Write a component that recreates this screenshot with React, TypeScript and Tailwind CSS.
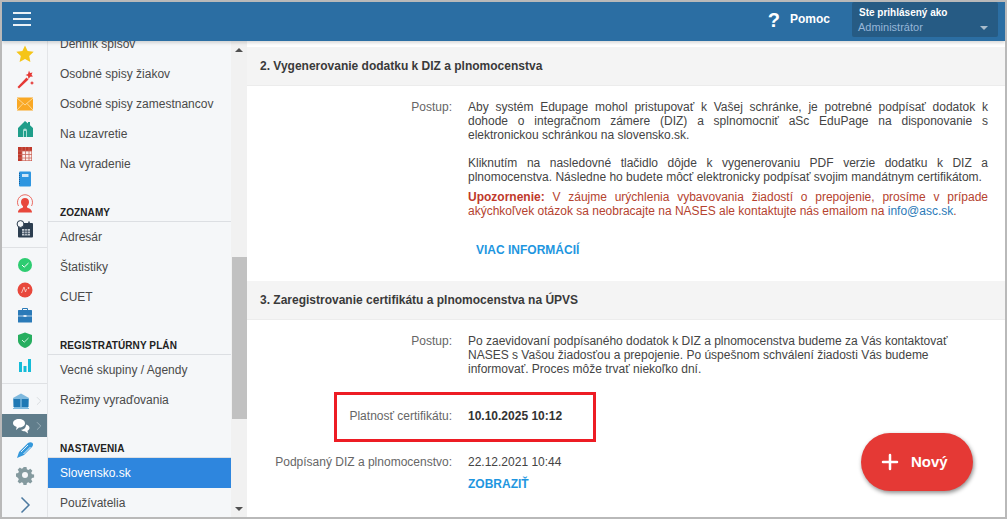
import { ChevronRight, Plus } from 'lucide-react';

const font = { fontFamily: '"Liberation Sans", Arial, sans-serif' };

function MenuItem({ label, active }: { label: string; active?: boolean }) {
  return (
    <div className={`h-[30px] pl-3 flex items-center text-[12px] ${active ? 'bg-[#2e86de] text-white' : 'text-[#4a4a4a]'}`}>
      {label}
    </div>
  );
}

function MenuHeading({ label }: { label: string }) {
  return (
    <div className="h-[16px] mt-[27px] pt-[1px] pl-3 text-[10px] font-bold tracking-[0.1px] text-[#222] border-b border-[#dcdfe3] leading-[12px]">
      {label}
    </div>
  );
}

function Icon({ children, h = 'h-[25px]' }: { children: React.ReactNode; h?: string }) {
  return (
    <div className={`${h} flex items-center justify-center`}>
      <svg viewBox="0 0 20 20" className="w-[20px] h-[20px]">
        {children}
      </svg>
    </div>
  );
}

function SideIcons() {
  return (
    <div className="w-[46px] shrink-0 bg-[#f5f7f9] border-r border-[#e3e5e8] flex flex-col">
      <Icon>
        <path d="M10 1.500l2.600 5.600 6.100.7-4.500 4.200 1.200 6L10 15l-5.400 3 1.200-6L1.300 7.800l6.100-.7z" fill="#f5c518" />
      </Icon>
      <Icon>
        <path d="M2.500 18L11.500 8.500l2 2-9.500 9z" fill="#e53935" />
        <path d="M14 1.500l1 2.500 2.500-.5-1 2.300 1.500 1.700-2.800.2L13.500 10 13 7l-2.500-1 2.500-1z" fill="#e53935" />
        <path d="M17 12l.7 1.300 1.300.7-1.300.7-.7 1.300-.7-1.300-1.300-.7 1.300-.7z" fill="#e53935" />
      </Icon>
      <Icon>
        <rect x="2" y="3.500" width="16" height="13" fill="#f9a825" />
        <path d="M2 4l8 7 8-7M2 16l6-6.500M18 16l-6-6.500" fill="none" stroke="#fde2b0" strokeWidth="0.8" />
      </Icon>
      <Icon>
        <path d="M10 2l3 2.500V3h2v3.200l3 2.800v9H3V9z" fill="#1f9e8a" />
        <path d="M8 18v-6.500a2 2 0 014 0V18h-1v-6H9v6z" fill="#a8dcd3" />
      </Icon>
      <Icon>
        <rect x="3" y="3" width="14" height="14" fill="#c0392b" />
        <path d="M7 7h9.500v9.500H7z" fill="#fbeeec" />
        <path d="M3 7h14M3 10.500h14M3 14h14M7 3v14M10.500 3v14M14 3v14" fill="none" stroke="#c9675c" strokeWidth="0.8" />
      </Icon>
      <Icon>
        <rect x="4" y="2.500" width="12" height="15" rx="1" fill="#2f96e0" />
        <rect x="7" y="5" width="6.500" height="3" fill="#cfe6f8" />
        <path d="M4.500 4v12" stroke="#14609c" strokeWidth="1" strokeDasharray="1 1" />
      </Icon>
      <Icon>
        <path d="M3 18.500c0-3.500 3-4 5-5v-1.200C6.500 11 6 9.500 6 8c0-2.500 1.700-4 4-4s4 1.500 4 4c0 1.500-.5 3-2 4.300v1.200c2 1 5 1.500 5 5z" fill="#e8483c" />
        <path d="M3.500 12A7.500 7.500 0 1116.500 12" fill="none" stroke="#e8483c" strokeWidth="0.8" />
      </Icon>
      <Icon>
        <rect x="3" y="4" width="15" height="14.500" rx="1" fill="#2c3e50" />
        <path d="M7 10h8v6.500H7z" fill="#c5ccd3" />
        <path d="M7 12.200h8M7 14.400h8M9.700 10v6.500M12.300 10v6.500" stroke="#2c3e50" strokeWidth="0.7" />
        <circle cx="5.500" cy="5" r="3.400" fill="#f5f7f9" stroke="#2c3e50" strokeWidth="1" />
        <path d="M14 2.500v3" stroke="#2c3e50" strokeWidth="1.500" />
      </Icon>
      <div className="h-[1px] bg-[#dfe1e4] mt-[6px] mb-[4px]" />
      <Icon>
        <circle cx="10" cy="10" r="7" fill="#2ecc71" />
        <path d="M7 10l2.200 2.200L13.500 8" fill="none" stroke="#fff" strokeWidth="1" />
      </Icon>
      <Icon>
        <circle cx="10" cy="10" r="7.500" fill="#e8483c" />
        <path d="M6.500 13L9 7l1.500 5 1-3M12.500 8h2M13.500 7v2" fill="none" stroke="#f8c9c4" strokeWidth="0.9" />
      </Icon>
      <Icon>
        <path d="M7.500 5V3.500h5V5" fill="none" stroke="#2a7ab8" strokeWidth="1" />
        <rect x="3" y="5" width="14" height="12.500" rx="0.500" fill="#2a7ab8" />
        <path d="M3 11h14" stroke="#dbe9f4" strokeWidth="0.8" />
        <rect x="8.500" y="10" width="3" height="2" fill="#dbe9f4" />
      </Icon>
      <Icon>
        <path d="M10 2.500l7 2.500v5.500c0 3.500-3 6-7 7.500-4-1.500-7-4-7-7.500V5z" fill="#27ae60" />
        <path d="M7 10l2.200 2.200L13.500 8" fill="none" stroke="#d6f3e2" strokeWidth="1" />
      </Icon>
      <Icon>
        <path d="M4 7h3v10H4zM8.500 11h3v6h-3zM13 4h3v13h-3z" fill="#14bcd8" />
      </Icon>
      <div className="h-[1px] bg-[#dfe1e4] mt-[6px] mb-[3px]" />
      <div className="h-[27px] flex items-center pl-[9px]">
        <svg viewBox="0 0 20 20" className="w-[20px] h-[20px]">
          <path d="M2 7l8-4.500L18 7l-1 10H3z" fill="#7fb9de" />
          <path d="M2.500 8h6.800v8H2.500zM10.700 8h6.800v8h-6.800z" fill="#1f78b4" />
          <path d="M2 17.500h16" stroke="#7fb9de" strokeWidth="1" />
        </svg>
        <ChevronRight className="w-[14px] h-[14px] text-[#d5d8dc] ml-[1px]" strokeWidth={1.5} />
      </div>
      <div className="h-[23px] bg-[#607d8b] flex items-center pl-[9px]">
        <svg viewBox="0 0 20 20" className="w-[20px] h-[20px]">
          <path d="M8 3c3.500 0 6 1.800 6 4.300S11.500 11.500 8 11.500l-3 2.500.7-3C3.500 10.300 2 9 2 7.300 2 4.800 4.500 3 8 3z" fill="#fff" />
          <path d="M15 8.500c2 .5 3.500 1.800 3.500 3.500 0 1.200-.7 2.200-2 2.800l.5 2.700-3-2.200c-1.500 0-3-.5-4-1.500 2.800 0 5-1.800 5-5.300z" fill="#fff" />
        </svg>
        <ChevronRight className="w-[14px] h-[14px] text-[#9fb2bc] ml-[1px]" strokeWidth={1.5} />
      </div>
      <Icon>
        <path d="M2 18l2-6L13 3c1.500-1 3.500-1 4.500 0s.5 3-.5 4l-8 8z" fill="#3498db" />
        <path d="M6 12l7-7M8.500 14l7-7" stroke="#f5f7f9" strokeWidth="0.9" />
      </Icon>
      <Icon>
        <path d="M8.500 2h3l.4 2.200 1.500.7 1.900-1.200 2.100 2.100-1.200 1.900.7 1.500 2.200.4v3l-2.200.4-.7 1.500 1.200 1.900-2.100 2.100-1.900-1.200-1.500.7-.4 2.200h-3l-.4-2.200-1.500-.7-1.900 1.200-2.100-2.100 1.200-1.900-.7-1.500L1 11.500v-3l2.200-.4.7-1.500-1.200-1.900 2.100-2.100 1.900 1.200 1.500-.7z" fill="#849a9f" />
        <circle cx="10" cy="10" r="3" fill="#f5f7f9" />
      </Icon>
      <div className="flex-1 pt-[5px] flex items-center justify-center">
        <svg viewBox="0 0 20 20" className="w-[20px] h-[20px]">
          <path d="M6.500 2.500L14 10l-7.500 7.500" fill="none" stroke="#4d7aa0" strokeWidth="1.500" />
        </svg>
      </div>
    </div>
  );
}

function Menu() {
  return (
    <div className="w-[183px] shrink-0 bg-[#f5f7f9] overflow-hidden">
      <div className="-mt-[12px]">
        <MenuItem label="Denník spisov" />
        <MenuItem label="Osobné spisy žiakov" />
        <MenuItem label="Osobné spisy zamestnancov" />
        <MenuItem label="Na uzavretie" />
        <MenuItem label="Na vyradenie" />
        <MenuHeading label="ZOZNAMY" />
        <MenuItem label="Adresár" />
        <MenuItem label="Štatistiky" />
        <MenuItem label="CUET" />
        <MenuHeading label="REGISTRATÚRNY PLÁN" />
        <MenuItem label="Vecné skupiny / Agendy" />
        <MenuItem label="Režimy vyraďovania" />
        <MenuHeading label="NASTAVENIA" />
        <MenuItem label="Slovensko.sk" active />
        <MenuItem label="Používatelia" />
      </div>
    </div>
  );
}

function Scrollbar() {
  return (
    <div className="w-[16px] shrink-0 bg-[#f1f1f1] flex flex-col items-center">
      <div className="h-[17px] flex items-center justify-center">
        <div className="w-0 h-0 border-x-[4px] border-x-transparent border-b-[4px] border-b-[#505050]" />
      </div>
      <div className="h-[199px]" />
      <div className="h-[162px] w-[15px] bg-[#c1c1c1]" />
      <div className="flex-1" />
      <div className="h-[17px] flex items-center justify-center">
        <div className="w-0 h-0 border-x-[4px] border-x-transparent border-t-[4px] border-t-[#505050]" />
      </div>
    </div>
  );
}

function SectionTitle({ text }: { text: string }) {
  return (
    <div className="h-[39px] bg-[#f4f4f4] border-b border-[#ececec] pl-[13px] flex items-center text-[12px] font-bold text-[#3a3a3a]">
      {text}
    </div>
  );
}

function Row({ label, children }: { label: string; children: React.ReactNode }) {
  return (
    <div className="flex text-[12px] leading-[14px]">
      <div className="w-[205px] shrink-0 text-right text-[#666]">{label}</div>
      <div className="ml-[16px] w-[520px] text-[#444]">{children}</div>
    </div>
  );
}

function Content() {
  return (
    <div className="flex-1 min-w-0 bg-white overflow-hidden pt-[6px]">
      <SectionTitle text="2. Vygenerovanie dodatku k DIZ a plnomocenstva" />
      <div className="pt-[14px]">
        <Row label="Postup:">
          <p className="text-justify">
            Aby systém Edupage mohol pristupovať k Vašej schránke, je potrebné podpísať dodatok k dohode o integračnom zámere (DIZ) a splnomocniť aSc EduPage na disponovanie s elektronickou schránkou na slovensko.sk.
          </p>
          <p className="text-justify mt-[14px]">
            Kliknutím na nasledovné tlačidlo dôjde k vygenerovaniu PDF verzie dodatku k DIZ a plnomocenstva. Následne ho budete môcť elektronicky podpísať svojim mandátnym certifikátom.
          </p>
          <p className="text-justify mt-[6px] text-[#b5432f]">
            <b className="text-[#c0392b]">Upozornenie:</b> V záujme urýchlenia vybavovania žiadostí o prepojenie, prosíme v prípade akýchkoľvek otázok sa neobracajte na NASES ale kontaktujte nás emailom na <span className="text-[#2a7ab8]">info@asc.sk</span>.
          </p>
        </Row>
      </div>
      <div className="ml-[229px] mt-[25px] text-[12px] leading-[14px] font-bold text-[#1e96e0]">VIAC INFORMÁCIÍ</div>
      <div className="mt-[24px]">
        <SectionTitle text="3. Zaregistrovanie certifikátu a plnomocenstva na ÚPVS" />
      </div>
      <div className="pt-[14px]">
        <Row label="Postup:">
          <p>
            Po zaevidovaní podpísaného dodatok k DIZ a plnomocenstva budeme za Vás kontaktovať<br />
            NASES s Vašou žiadosťou a prepojenie. Po úspešnom schválení žiadosti Vás budeme<br />
            informovať. Proces môže trvať niekoľko dní.
          </p>
        </Row>
      </div>
      <div className="mt-[33px]">
        <Row label="Platnosť certifikátu:">
          <b className="text-[#333]">10.10.2025 10:12</b>
        </Row>
      </div>
      <div className="mt-[32px]">
        <Row label="Podpísaný DIZ a plnomocenstvo:">22.12.2021 10:44</Row>
      </div>
      <div className="ml-[221px] mt-[8px] text-[12px] leading-[14px] font-bold text-[#1e96e0]">ZOBRAZIŤ</div>
    </div>
  );
}

export default function App() {
  return (
    <div style={font} className="relative w-[1007px] h-[519px] border-2 border-[#b9b9b9] flex flex-col overflow-hidden bg-white">
      <header className="relative z-10 h-[39px] shrink-0 bg-[#2b6ea3] shadow-[0_2px_3px_rgba(0,0,0,0.15)] flex items-center">
        <div className="ml-[11px] mb-[6px] w-[18px] flex flex-col gap-[4px]">
          <div className="h-[2px] bg-white/90" />
          <div className="h-[2px] bg-white/90" />
          <div className="h-[2px] bg-white/90" />
        </div>
        <div className="ml-auto mb-[4px] flex items-center text-white font-bold text-[12px]">
          <span className="text-[20px] mr-[10px]">?</span>
          <span className="mb-[2px]">Pomoc</span>
        </div>
        <div className="ml-[22px] mr-[7px] mb-[4px] w-[146px] h-[35px] bg-[#265b84] rounded-[2px] px-[7px] pt-[5px] relative">
          <div className="text-[10px] leading-[12px] font-bold text-white">Ste prihlásený ako</div>
          <div className="text-[11px] leading-[12px] mt-[2px] -ml-[1px] text-[#96b6d8]">Administrátor</div>
          <div className="absolute right-[10px] bottom-[7px] w-0 h-0 border-x-[4px] border-x-transparent border-t-[4px] border-t-[#a9bccb]" />
        </div>
      </header>
      <div className="flex-1 flex min-h-0">
        <SideIcons />
        <Menu />
        <Scrollbar />
        <Content />
      </div>
      {/* highlight rectangle over the screenshot */}
      <div className="absolute left-[332px] top-[390px] w-[262px] h-[50px] border-[3px] border-[#ed1c24]" />
      <button className="absolute left-[859px] top-[431px] w-[112px] h-[58px] pl-[17px] rounded-[29px] bg-[#e53935] text-white font-bold text-[15px] flex items-center gap-[9px] shadow-[1px_2px_4px_rgba(0,0,0,0.45)]">
        <Plus className="w-[24px] h-[24px]" strokeWidth={2.5} />
        Nový
      </button>
    </div>
  );
}
